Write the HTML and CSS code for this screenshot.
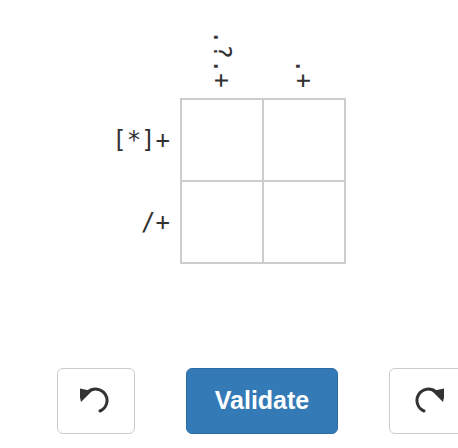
FILE: index.html
```html
<!DOCTYPE html>
<html lang="en">
<head>
<meta charset="utf-8">
<title>Regex crossword</title>
<link rel="stylesheet" href="styles.css">
</head>
<body>
<div class="page">
  <div class="puzzle">
    <div class="corner"></div>
    <div class="col-heads">
      <div class="col-head"><span class="vtext">.?.+</span></div>
      <div class="col-head"><span class="vtext">.+</span></div>
    </div>
    <div class="row-heads">
      <div class="row-head">[*]+</div>
      <div class="row-head">/+</div>
    </div>
    <div class="grid">
      <div class="cell"></div>
      <div class="cell"></div>
      <div class="cell"></div>
      <div class="cell"></div>
    </div>
  </div>
  <div class="actions">
    <button class="btn btn-icon" type="button" aria-label="Undo">
      <svg class="icon" width="32" height="28" viewBox="4 2 32 28">
        <polygon points="2,3 16,6 5,17" fill="#333"/>
        <path d="M12 7 A11.4 11.4 0 1 1 24 26" fill="none" stroke="#333" stroke-width="3" stroke-linecap="round"/>
      </svg>
    </button>
    <button class="btn btn-primary" type="button">Validate</button>
    <button class="btn btn-icon" type="button" aria-label="Redo">
      <svg class="icon" width="32" height="28" viewBox="4 2 32 28">
        <polygon points="38,3 24,6 35,17" fill="#333"/>
        <path d="M28 7 A11.4 11.4 0 1 0 16 26" fill="none" stroke="#333" stroke-width="3" stroke-linecap="round"/>
      </svg>
    </button>
  </div>
</div>
</body>
</html>
```
FILE: styles.css
```css
html, body {
  margin: 0;
  padding: 0;
  background: #fff;
  overflow: hidden;
}

.page {
  width: 458px;
  height: 448px;
  overflow: hidden;
  color: #333;
  font-family: "DejaVu Sans Mono", monospace;
}

.puzzle {
  display: grid;
  grid-template-columns: 80px 166px;
  margin-top: 30px;
  margin-left: 100px;
}

.col-heads {
  display: flex;
  gap: 2px;
  padding-left: 2px;
}

.col-head {
  width: 80px;
  display: flex;
  justify-content: center;
  align-items: flex-end;
  padding-bottom: 10px;
}

.vtext {
  writing-mode: vertical-lr;
  font-size: 24px;
  line-height: 1;
}

.row-heads {
  display: flex;
  flex-direction: column;
  gap: 2px;
  padding-top: 2px;
}

.row-head {
  height: 80px;
  display: flex;
  align-items: center;
  justify-content: flex-end;
  padding-right: 10px;
  font-size: 24px;
  line-height: 1;
}

.grid {
  display: grid;
  grid-template-columns: repeat(2, 80px);
  grid-auto-rows: 80px;
  gap: 2px;
  border: 2px solid #ccc;
  background: #ccc;
  width: 166px;
  height: 166px;
  box-sizing: border-box;
}

.cell {
  background: #fff;
}

.actions {
  display: flex;
  gap: 51px;
  margin-top: 104px;
  padding-left: 57px;
}

.btn {
  flex: none;
  height: 66px;
  box-sizing: border-box;
  border-radius: 6px;
  padding: 0;
  display: flex;
  align-items: center;
  justify-content: center;
  cursor: pointer;
}

.btn-icon {
  width: 78px;
  background: #fff;
  border: 1px solid #ccc;
}

.btn-primary {
  width: 152px;
  background: #337ab7;
  border: 1px solid #2e6da4;
  color: #fff;
  font-family: "Liberation Sans", Arial, sans-serif;
  font-weight: bold;
  font-size: 25px;
}

.icon {
  display: block;
}
```
